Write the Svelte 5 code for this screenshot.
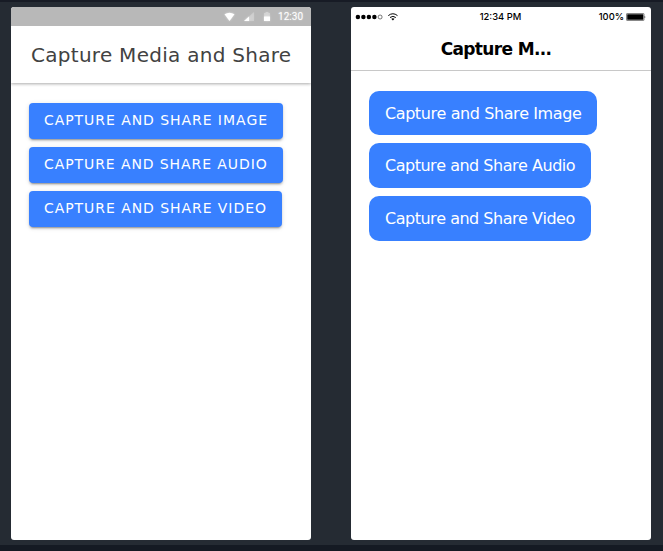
<script>
  const items = ['Image', 'Audio', 'Video'];
</script>

<main>
  <section class="phone android">
    <div class="status">
      <svg class="signals" width="50" height="12" viewBox="0 0 50 12" fill="#fff">
        <path d="M.5 3.3Q5.5.3 10.5 3.3L5.5 10Z" />
        <path opacity=".25" d="M30 1V10H20Z" />
        <path d="M25 5.5V10H20Z" />
        <path opacity=".3" d="M40 2h1.5V1h3v1h1.5v4h-6Z" />
        <path d="M40 5.5h6V10h-6Z" />
      </svg>
      <span class="clock">12:30</span>
    </div>
    <header>Capture Media and Share</header>
    <div class="content">
      {#each items as item}
        <button>Capture and Share {item}</button>
      {/each}
    </div>
  </section>

  <section class="phone ios">
    <div class="status">
      <svg width="46" height="12" viewBox="0 0 46 12">
        <g fill="#000">
          <circle cx="2.9" cy="6" r="2.25" /><circle cx="8.4" cy="6" r="2.25" />
          <circle cx="13.9" cy="6" r="2.25" /><circle cx="19.4" cy="6" r="2.25" />
        </g>
        <circle cx="25.1" cy="6" r="2" fill="none" stroke="#222" stroke-width=".6" />
        <g fill="none" stroke="#000" stroke-width="1">
          <path d="M33.3 4.6Q37.9.9 42.5 4.6" />
          <path d="M35 6.5Q37.9 4.2 40.8 6.5" />
        </g>
        <path d="M36.3 7.8Q37.9 6.6 39.5 7.8L37.9 9.4Z" />
      </svg>
      <span class="time">12:34 PM</span>
      <span class="power">100%
        <svg width="20" height="8" viewBox="0 0 20 8">
          <rect x=".5" y=".5" width="17.5" height="7" rx=".6" fill="#fff" stroke="#555" stroke-width=".7" />
          <rect x="1.2" y="1.2" width="16.1" height="5.6" rx=".3" />
          <path d="M18.7 2.7Q20 4 18.7 5.3Z" />
        </svg>
      </span>
    </div>
    <header>Capture M...</header>
    <div class="content">
      {#each items as item}
        <button>Capture and Share {item}</button>
      {/each}
    </div>
  </section>
</main>

<style>
  main {
    box-sizing: border-box;
    width: 663px;
    height: 551px;
    padding: 7px 12px 0 11px;
    display: flex;
    gap: 40px;
    background: linear-gradient(#171b25 0 2px, #252b33 2px 545px, #151a23 545px);
    font-family: "DejaVu Sans", sans-serif;
  }
  .phone {
    width: 300px;
    height: 533px;
    border-radius: 3px;
    background: #fff;
    overflow: hidden;
    display: flex;
    flex-direction: column;
  }
  .status, header {
    box-sizing: border-box;
    flex: none;
  }
  .content {
    display: flex;
    flex-direction: column;
    align-items: flex-start;
  }
  button {
    border: 0;
    margin: 0;
    color: #fff;
    background: #3880ff;
    font-family: inherit;
    font-kerning: none;
    white-space: nowrap;
  }
  .android .status {
    height: 19px;
    background: #b8b8b8;
    color: #fff;
    display: flex;
    align-items: center;
    justify-content: flex-end;
    padding-right: 8px;
    gap: 4px;
    font: 10px/19px Roboto, sans-serif;
    position: relative;
  }
  .signals {
    filter: drop-shadow(0 0 1px #ffffff80);
  }
  .clock {
    text-shadow: 0 0 2px #ffffff90;
  }
  .android header {
    height: 57px;
    padding-left: 20px;
    font-size: 20px;
    line-height: 58px;
    letter-spacing: .28px;
    color: #424242;
    box-shadow: 0 1px 3px #0005;
    white-space: nowrap;
  }
  .android .content {
    padding: 20px 18px;
    gap: 8px;
  }
  .android button {
    height: 36px;
    padding: 0 15.2px 2px 15px;
    border-radius: 4px;
    font-size: 14px;
    letter-spacing: .94px;
    text-transform: uppercase;
    box-shadow: 0 3px 1px -2px #0003, 0 2px 2px #00000024, 0 1px 5px #0000001f;
  }
  .android button:nth-child(2) {
    letter-spacing: .91px;
  }
  .ios .status {
    height: 20px;
    padding: 0 5px 0 4px;
    display: grid;
    grid-template-columns: 1fr auto 1fr;
    align-items: center;
    font: 500 9.4px/20px Inter, sans-serif;
    color: #000;
  }
  .ios .power {
    display: flex;
    align-items: center;
    justify-content: flex-end;
    gap: 2px;
  }
  .ios header {
    height: 44px;
    border-bottom: 1px solid #c8c8c8;
    text-align: center;
    padding-right: 10px;
    font-size: 17px;
    line-height: 45px;
    font-weight: 700;
    letter-spacing: -.65px;
    color: #000;
  }
  .ios .content {
    padding: 19.6px 18px;
    gap: 8px;
  }
  .ios button {
    height: 44.8px;
    padding: 0 16px;
    border-radius: 10px;
    font-size: 16px;
    letter-spacing: -.49px;
  }
  .ios button:first-child {
    padding-top: .6px;
    letter-spacing: -.42px;
  }
</style>
